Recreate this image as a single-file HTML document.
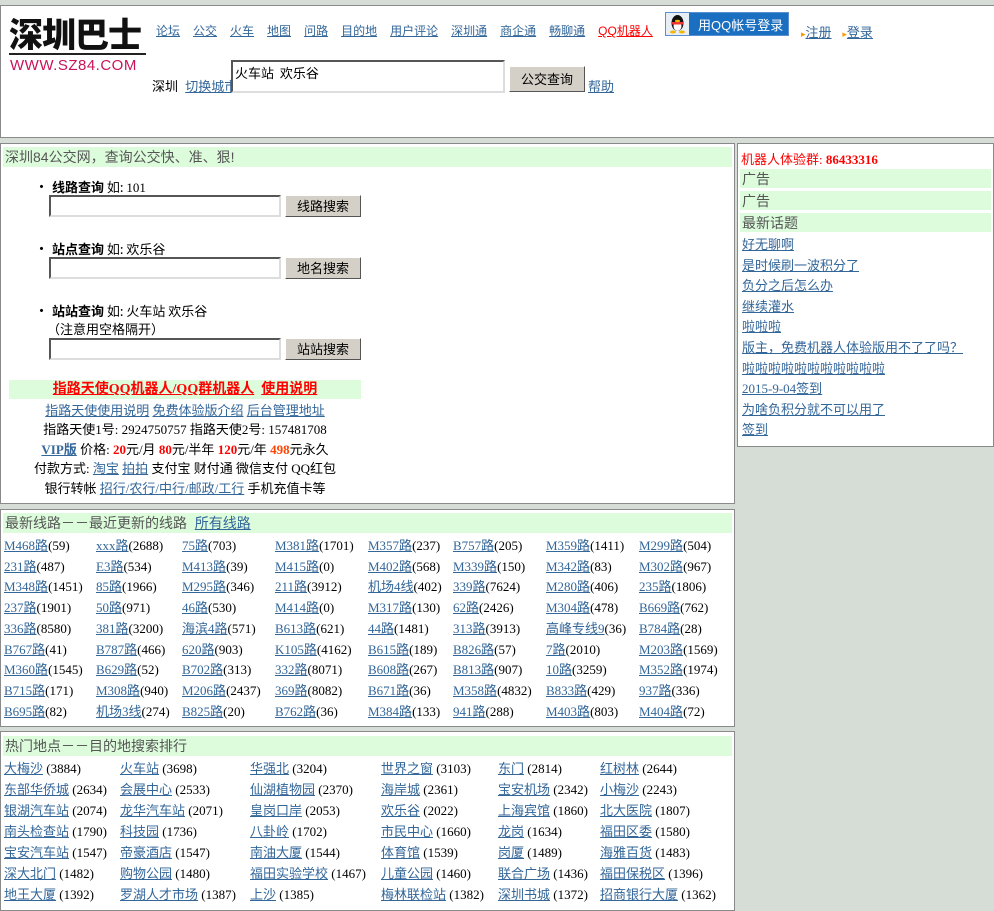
<!DOCTYPE html>
<html><head><meta charset="utf-8">
<style>
*{margin:0;padding:0;box-sizing:border-box}
body{width:994px;height:904px;overflow:hidden;background:#d6ddd6;font-family:"Liberation Serif","Noto Sans CJK SC",sans-serif;font-size:13px;color:#000;position:relative}
a{color:#336699;text-decoration:underline}
.box{position:absolute;background:#fff;border:1px solid #8a8a8a}
.abs{position:absolute;white-space:nowrap}
.ttl{background:#dcfcdc;color:#555;font-size:14px;height:20px;line-height:20px;padding-left:2px;font-family:"Liberation Sans","Noto Sans CJK SC",sans-serif}
.inp{position:absolute;height:22px;border:2px inset #aaa;border-right-color:#ddd;border-bottom-color:#ddd;background:#fff}
.btn{position:absolute;height:22px;background:#d4d0c8;border:1px solid;border-color:#fff #555 #555 #fff;font-size:13px;text-align:center;line-height:20px;font-family:"Noto Sans CJK SC",sans-serif}
.row{position:absolute;left:4px;white-space:nowrap;height:20px;line-height:20px}
.row span{display:inline-block;overflow:visible}
.nav a{margin-right:13px}
.red{color:#f00}
</style></head><body>

<!-- header -->
<div class="box" style="left:0;top:5px;width:994px;height:133px;border-right:none">
  <div class="abs" style="left:8px;top:8px;font-family:'Noto Sans CJK SC',sans-serif;font-weight:900;font-size:34px;line-height:38px;color:#111;letter-spacing:-1px">深圳巴士</div>
  <div class="abs" style="left:8px;top:47px;width:137px;height:2px;background:#222"></div>
  <div class="abs" style="left:9px;top:51px;font-family:'Liberation Sans',sans-serif;font-size:15px;color:#c8145a;letter-spacing:0.5px">WWW.SZ84.COM</div>
  <div class="abs nav" style="left:155px;top:16px;font-size:12px;font-family:'Liberation Sans','Noto Sans CJK SC',sans-serif">
    <a>论坛</a><a>公交</a><a>火车</a><a>地图</a><a>问路</a><a>目的地</a><a>用户评论</a><a>深圳通</a><a>商企通</a><a>畅聊通</a><a style="color:#f00">QQ机器人</a>
  </div>
  <div class="abs" style="left:664px;top:6px;width:124px;height:24px;background:#1a6fc0;border:1px solid #5a8fd0">
    <div style="position:absolute;left:0;top:0;width:23px;height:22px;background:#e8eef6">
      <svg width="23" height="22" viewBox="0 0 23 22"><ellipse cx="11.5" cy="10" rx="6" ry="8" fill="#111"/><ellipse cx="11.5" cy="13" rx="4" ry="5" fill="#fff"/><rect x="6" y="9" width="11" height="2.5" fill="#e33"/><ellipse cx="11.5" cy="8" rx="2.5" ry="1.2" fill="#f5b400"/><ellipse cx="7" cy="19" rx="3" ry="1.5" fill="#f5b400"/><ellipse cx="16" cy="19" rx="3" ry="1.5" fill="#f5b400"/></svg>
    </div>
    <div style="position:absolute;left:32px;top:2px;color:#fff;font-size:13px;font-family:'Liberation Sans','Noto Sans CJK SC',sans-serif">用QQ帐号登录</div>
  </div>
  <div class="abs" style="left:800px;top:16px;font-family:'Liberation Sans','Noto Sans CJK SC',sans-serif"><span style="color:#f90;font-size:9px">▸</span><a>注册</a> &nbsp; <span style="color:#f90;font-size:9px">▸</span><a>登录</a></div>
  <div class="abs" style="left:151px;top:70px;font-family:'Liberation Sans','Noto Sans CJK SC',sans-serif">深圳 &nbsp;<a>切换城市</a></div>
  <div class="inp" style="left:230px;top:54px;width:274px;height:33px;padding:2px 2px;font-size:13px;font-family:'Noto Sans CJK SC',sans-serif;line-height:18px">火车站 &nbsp;欢乐谷</div>
  <div class="btn" style="left:508px;top:60px;width:76px;height:26px;line-height:24px">公交查询</div>
  <div class="abs" style="left:587px;top:70px;font-family:'Liberation Sans','Noto Sans CJK SC',sans-serif"><a>帮助</a></div>
</div>

<!-- left main -->
<div class="box" style="left:0;top:143px;width:735px;height:361px">
  <div class="ttl" style="position:absolute;left:2px;top:3px;width:729px">深圳84公交网，查询公交快、准、狠!</div>
  <div class="abs" style="left:33px;top:32px;font-family:'Noto Sans CJK SC',sans-serif"><span style="font-size:15px">•</span>&nbsp;<b>线路查询</b> 如: <span style="font-family:'Liberation Serif'">101</span></div>
  <div class="inp" style="left:48px;top:51px;width:232px"></div>
  <div class="btn" style="left:284px;top:51px;width:76px">线路搜索</div>
  <div class="abs" style="left:33px;top:94px;font-family:'Noto Sans CJK SC',sans-serif"><span style="font-size:15px">•</span>&nbsp;<b>站点查询</b> 如: 欢乐谷</div>
  <div class="inp" style="left:48px;top:113px;width:232px"></div>
  <div class="btn" style="left:284px;top:113px;width:76px">地名搜索</div>
  <div class="abs" style="left:33px;top:156px;font-family:'Noto Sans CJK SC',sans-serif"><span style="font-size:15px">•</span>&nbsp;<b>站站查询</b> 如: 火车站 欢乐谷</div>
  <div class="abs" style="left:46px;top:175px;font-family:'Noto Sans CJK SC',sans-serif">（注意用空格隔开）</div>
  <div class="inp" style="left:48px;top:194px;width:232px"></div>
  <div class="btn" style="left:284px;top:194px;width:76px">站站搜索</div>
  <div class="abs" style="left:8px;top:236px;width:352px;height:19px;background:#dcfcdc;text-align:center;font-weight:bold;font-size:14px;line-height:19px"><a style="color:#f00">指路天使QQ机器人/QQ群机器人</a> &nbsp;<a style="color:#f00">使用说明</a></div>
  <div class="abs" style="left:8px;top:257px;width:352px;text-align:center;line-height:19.4px">
    <a>指路天使使用说明</a> <a>免费体验版介绍</a> <a>后台管理地址</a><br>
    指路天使1号: 2924750757 指路天使2号: 157481708<br>
    <a style="font-weight:bold">VIP版</a> 价格: <b class="red">20</b>元/月 <b class="red">80</b>元/半年 <b class="red">120</b>元/年 <b style="color:#f40">498</b>元永久<br>
    付款方式: <a>淘宝</a> <a>拍拍</a> 支付宝 财付通 微信支付 QQ红包<br>
    银行转帐 <a>招行/农行/中行/邮政/工行</a> 手机充值卡等
  </div>
</div>

<!-- right -->
<div class="box" style="left:737px;top:143px;width:257px;height:304px">
  <div class="abs" style="left:3px;top:5px;color:#f00">机器人体验群: <b>86433316</b></div>
  <div class="ttl" style="position:absolute;left:2px;top:25px;width:251px;height:19px">广告</div>
  <div class="ttl" style="position:absolute;left:2px;top:47px;width:251px;height:19px">广告</div>
  <div class="ttl" style="position:absolute;left:2px;top:69px;width:251px;height:19px">最新话题</div>
  <div class="abs" style="left:4px;top:91px;line-height:20.6px">
    <a>好无聊啊</a><br><a>是时候刷一波积分了</a><br><a>负分之后怎么办</a><br><a>继续灌水</a><br><a>啦啦啦</a><br><a>版主，免费机器人体验版用不了了吗？</a><br><a>啦啦啦啦啦啦啦啦啦啦啦</a><br><a>2015-9-04签到</a><br><a>为啥负积分就不可以用了</a><br><a>签到</a>
  </div>
</div>

<!-- routes -->
<div class="box" style="left:0;top:509px;width:735px;height:218px">
  <div class="ttl" style="position:absolute;left:2px;top:3px;width:729px">最新线路－－最近更新的线路 &nbsp;<a>所有线路</a></div>
</div>
<div style="position:absolute;left:0;top:536px" id="routes">
<style>
#routes .row span:nth-child(1){width:92px}#routes .row span:nth-child(2){width:86px}#routes .row span:nth-child(3){width:93px}#routes .row span:nth-child(4){width:93px}#routes .row span:nth-child(5){width:85px}#routes .row span:nth-child(6){width:93px}#routes .row span:nth-child(7){width:93px}
#hot .row span:nth-child(1){width:116px}#hot .row span:nth-child(2){width:130px}#hot .row span:nth-child(3){width:131px}#hot .row span:nth-child(4){width:117px}#hot .row span:nth-child(5){width:102px}
</style>
<div class="row" style="top:0"><span><a>M468路</a>(59)</span><span><a>xxx路</a>(2688)</span><span><a>75路</a>(703)</span><span><a>M381路</a>(1701)</span><span><a>M357路</a>(237)</span><span><a>B757路</a>(205)</span><span><a>M359路</a>(1411)</span><span><a>M299路</a>(504)</span></div>
<div class="row" style="top:20.7px"><span><a>231路</a>(487)</span><span><a>E3路</a>(534)</span><span><a>M413路</a>(39)</span><span><a>M415路</a>(0)</span><span><a>M402路</a>(568)</span><span><a>M339路</a>(150)</span><span><a>M342路</a>(83)</span><span><a>M302路</a>(967)</span></div>
<div class="row" style="top:41.4px"><span><a>M348路</a>(1451)</span><span><a>85路</a>(1966)</span><span><a>M295路</a>(346)</span><span><a>211路</a>(3912)</span><span><a>机场4线</a>(402)</span><span><a>339路</a>(7624)</span><span><a>M280路</a>(406)</span><span><a>235路</a>(1806)</span></div>
<div class="row" style="top:62.1px"><span><a>237路</a>(1901)</span><span><a>50路</a>(971)</span><span><a>46路</a>(530)</span><span><a>M414路</a>(0)</span><span><a>M317路</a>(130)</span><span><a>62路</a>(2426)</span><span><a>M304路</a>(478)</span><span><a>B669路</a>(762)</span></div>
<div class="row" style="top:82.8px"><span><a>336路</a>(8580)</span><span><a>381路</a>(3200)</span><span><a>海滨4路</a>(571)</span><span><a>B613路</a>(621)</span><span><a>44路</a>(1481)</span><span><a>313路</a>(3913)</span><span><a>高峰专线9</a>(36)</span><span><a>B784路</a>(28)</span></div>
<div class="row" style="top:103.5px"><span><a>B767路</a>(41)</span><span><a>B787路</a>(466)</span><span><a>620路</a>(903)</span><span><a>K105路</a>(4162)</span><span><a>B615路</a>(189)</span><span><a>B826路</a>(57)</span><span><a>7路</a>(2010)</span><span><a>M203路</a>(1569)</span></div>
<div class="row" style="top:124.2px"><span><a>M360路</a>(1545)</span><span><a>B629路</a>(52)</span><span><a>B702路</a>(313)</span><span><a>332路</a>(8071)</span><span><a>B608路</a>(267)</span><span><a>B813路</a>(907)</span><span><a>10路</a>(3259)</span><span><a>M352路</a>(1974)</span></div>
<div class="row" style="top:144.9px"><span><a>B715路</a>(171)</span><span><a>M308路</a>(940)</span><span><a>M206路</a>(2437)</span><span><a>369路</a>(8082)</span><span><a>B671路</a>(36)</span><span><a>M358路</a>(4832)</span><span><a>B833路</a>(429)</span><span><a>937路</a>(336)</span></div>
<div class="row" style="top:165.6px"><span><a>B695路</a>(82)</span><span><a>机场3线</a>(274)</span><span><a>B825路</a>(20)</span><span><a>B762路</a>(36)</span><span><a>M384路</a>(133)</span><span><a>941路</a>(288)</span><span><a>M403路</a>(803)</span><span><a>M404路</a>(72)</span></div>
</div>

<!-- hot -->
<div class="box" style="left:0;top:731px;width:735px;height:180px">
  <div class="ttl" style="position:absolute;left:2px;top:4px;width:729px">热门地点－－目的地搜索排行</div>
</div>
<div style="position:absolute;left:0;top:759px" id="hot">
<div class="row" style="top:0"><span><a>大梅沙</a> (3884)</span><span><a>火车站</a> (3698)</span><span><a>华强北</a> (3204)</span><span><a>世界之窗</a> (3103)</span><span><a>东门</a> (2814)</span><span><a>红树林</a> (2644)</span></div>
<div class="row" style="top:21px"><span><a>东部华侨城</a> (2634)</span><span><a>会展中心</a> (2533)</span><span><a>仙湖植物园</a> (2370)</span><span><a>海岸城</a> (2361)</span><span><a>宝安机场</a> (2342)</span><span><a>小梅沙</a> (2243)</span></div>
<div class="row" style="top:42px"><span><a>银湖汽车站</a> (2074)</span><span><a>龙华汽车站</a> (2071)</span><span><a>皇岗口岸</a> (2053)</span><span><a>欢乐谷</a> (2022)</span><span><a>上海宾馆</a> (1860)</span><span><a>北大医院</a> (1807)</span></div>
<div class="row" style="top:63px"><span><a>南头检查站</a> (1790)</span><span><a>科技园</a> (1736)</span><span><a>八卦岭</a> (1702)</span><span><a>市民中心</a> (1660)</span><span><a>龙岗</a> (1634)</span><span><a>福田区委</a> (1580)</span></div>
<div class="row" style="top:84px"><span><a>宝安汽车站</a> (1547)</span><span><a>帝豪酒店</a> (1547)</span><span><a>南油大厦</a> (1544)</span><span><a>体育馆</a> (1539)</span><span><a>岗厦</a> (1489)</span><span><a>海雅百货</a> (1483)</span></div>
<div class="row" style="top:105px"><span><a>深大北门</a> (1482)</span><span><a>购物公园</a> (1480)</span><span><a>福田实验学校</a> (1467)</span><span><a>儿童公园</a> (1460)</span><span><a>联合广场</a> (1436)</span><span><a>福田保税区</a> (1396)</span></div>
<div class="row" style="top:126px"><span><a>地王大厦</a> (1392)</span><span><a>罗湖人才市场</a> (1387)</span><span><a>上沙</a> (1385)</span><span><a>梅林联检站</a> (1382)</span><span><a>深圳书城</a> (1372)</span><span><a>招商银行大厦</a> (1362)</span></div>
</div>
</body></html>
